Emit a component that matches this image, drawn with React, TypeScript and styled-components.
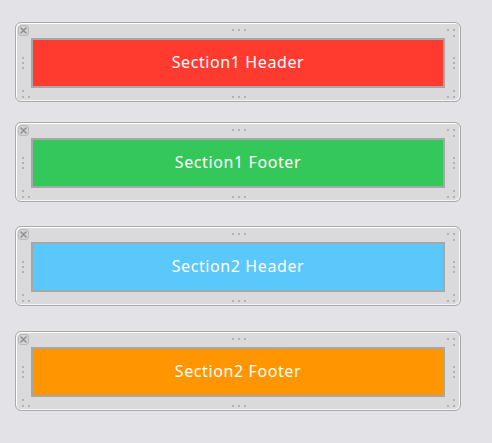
import React from "react";
import styled, { createGlobalStyle } from "styled-components";

const Global = createGlobalStyle`
  html, body { margin: 0; padding: 0; background: #e3e3e7; }
  body { font-family: "Noto Sans", "Noto Sans CJK JP", sans-serif; }
`;

const Page = styled.div`
  display: flex;
  flex-direction: column;
  padding: 22px 0 0 15px;
  width: 492px;
  height: 443px;
  box-sizing: border-box;
`;

const Panel = styled.div<{ $mt: number }>`
  position: relative;
  margin-top: ${(p) => p.$mt}px;
  width: 446px;
  height: 80px;
  box-sizing: border-box;
  border: 1px solid #a9a9ad;
  border-radius: 6px;
  background: #dadadd;
  box-shadow: inset 1px 1px 0 #ffffff, inset -1px -1px 0 #f4f4f6;
  padding: 15px;
  display: flex;
`;

const Bar = styled.div<{ $bg: string }>`
  flex: 1;
  height: 50px;
  box-sizing: border-box;
  border: 2px solid #a7a7aa;
  background: ${(p) => p.$bg};
  display: flex;
  align-items: center;
  justify-content: center;
  color: #ffffff;
  font-size: 16px;
  font-weight: 400;
  letter-spacing: 0.6px;
  padding-bottom: 2px;
`;

const Close = styled.div`
  position: absolute;
  left: 2px;
  top: 2px;
  width: 11px;
  height: 11px;
  box-sizing: border-box;
  border: 1px solid #b9b9bc;
  border-radius: 3px;
  background: #d3d3d6;
  display: flex;
  align-items: center;
  justify-content: center;
`;

const Dot = styled.span`
  position: absolute;
  width: 2px;
  height: 2px;
  border-radius: 1px;
  background: #a3a3a8;
`;

const dots: [number, number][] = [
  [216, 6], [222, 6], [228, 6],
  [216, 73], [222, 73], [228, 73],
  [6, 34], [6, 39], [6, 44],
  [437, 34], [437, 39], [437, 44],
  [431, 6], [437, 6], [437, 12],
  [6, 67], [6, 73], [12, 73],
  [437, 67], [431, 73], [437, 73],
];

const sections = [
  { label: "Section1 Header", color: "#ff3b30", mt: 0 },
  { label: "Section1 Footer", color: "#34c85a", mt: 20 },
  { label: "Section2 Header", color: "#5ac8fa", mt: 24 },
  { label: "Section2 Footer", color: "#ff9500", mt: 25 },
];

export default function App() {
  return (
    <>
      <Global />
      <Page>
        {sections.map((s) => (
          <Panel key={s.label} $mt={s.mt}>
            <Close>
              <svg width="7" height="7" viewBox="0 0 7 7">
                <path d="M1 1L6 6M6 1L1 6" stroke="#8f8f94" strokeWidth="1.6" strokeLinecap="round" />
              </svg>
            </Close>
            {dots.map(([x, y], i) => (
              <Dot key={i} style={{ left: x, top: y }} />
            ))}
            <Bar $bg={s.color}>{s.label}</Bar>
          </Panel>
        ))}
      </Page>
    </>
  );
}
